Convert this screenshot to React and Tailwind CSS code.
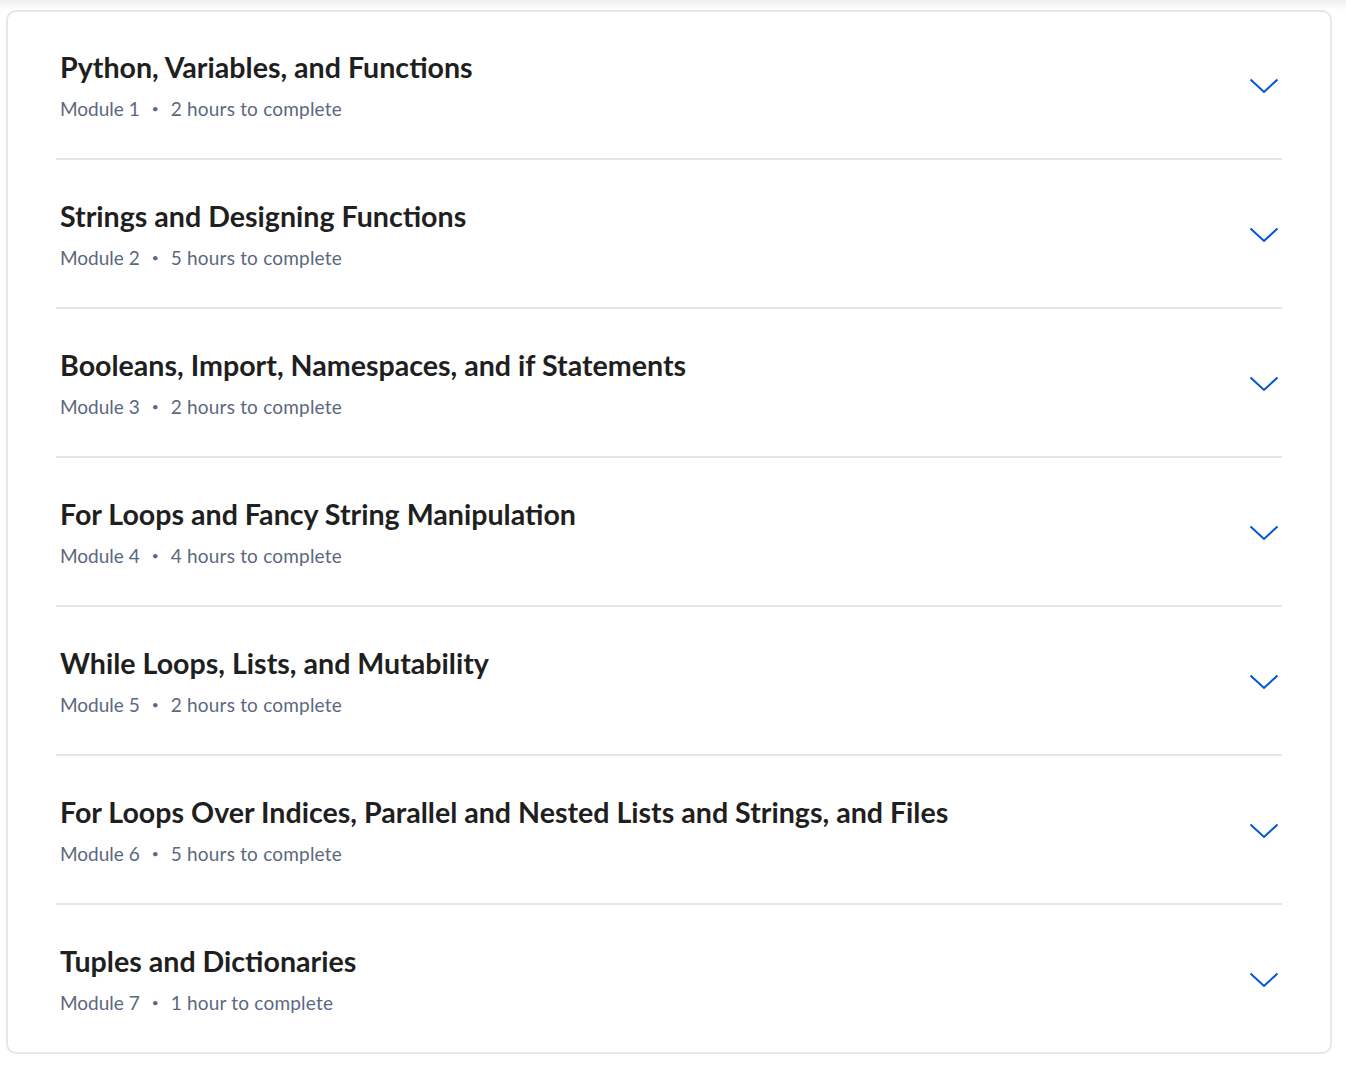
import React from "react";

const modules = [
  { title: "Python, Variables, and Functions", n: 1, time: "2 hours to complete" },
  { title: "Strings and Designing Functions", n: 2, time: "5 hours to complete" },
  { title: "Booleans, Import, Namespaces, and if Statements", n: 3, time: "2 hours to complete" },
  { title: "For Loops and Fancy String Manipulation", n: 4, time: "4 hours to complete" },
  { title: "While Loops, Lists, and Mutability", n: 5, time: "2 hours to complete" },
  { title: "For Loops Over Indices, Parallel and Nested Lists and Strings, and Files", n: 6, time: "5 hours to complete" },
  { title: "Tuples and Dictionaries", n: 7, time: "1 hour to complete" },
];

function Chevron() {
  return (
    <svg width="30" height="16" viewBox="0 0 30 16" fill="none">
      <polyline points="1.5,1.5 15,14 28.5,1.5" stroke="#0056d2" strokeWidth="2" strokeLinejoin="miter" />
    </svg>
  );
}

export default function App() {
  return (
    <div className="min-h-screen bg-white font-['Lato',sans-serif]">
      <div className="h-[10px] bg-gradient-to-b from-[#efefef] to-white" />
      <div className="ml-[6px] w-[1326px] rounded-[10px] border-2 border-[#e6e7e8] bg-white px-[48px]">
        {modules.map((m, i) => (
          <div
            key={m.n}
            className={`flex items-center justify-between pb-[37px] ${
              i === 0 ? "pt-[37px]" : "pt-[38px]"
            } ${i < modules.length - 1 ? "border-b-2 border-[#e6e6e6]" : ""}`}
          >
            <div className="pl-[4px]">
              <h3 className="text-[28.6px] leading-[36px] font-bold text-[#1f1f1f]">
                {m.title}
              </h3>
              <p className="mt-[12px] flex items-center text-[19px] leading-[24px] text-[#5b6780]">
                <span>Module {m.n}</span>
                <span className="mx-[12px] text-[12px]">•</span>
                <span className="tracking-[0.2px]">{m.time}</span>
              </p>
            </div>
            <button className="mt-[2px] flex h-[36px] w-[36px] items-center justify-center">
              <Chevron />
            </button>
          </div>
        ))}
      </div>
    </div>
  );
}
